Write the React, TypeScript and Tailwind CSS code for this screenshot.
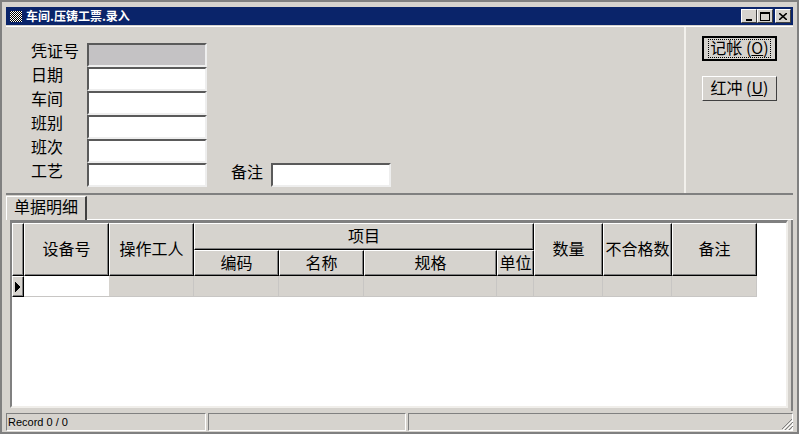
const font = "font-['Noto_Sans_CJK_SC','Liberation_Sans',sans-serif]";

const fields = ["日期", "车间", "班别", "班次"];

function Field({ label, disabled }: { label: string; disabled?: boolean }) {
  return (
    <div className="flex h-6 items-center">
      <span className="mb-[11px] w-[81px] pl-[25px] text-[16px] leading-none text-black">{label}</span>
      <Input className="w-[120px]" disabled={disabled} />
    </div>
  );
}

function Input({ className, disabled }: { className: string; disabled?: boolean }) {
  return (
    <div
      className={`h-[24px] border-2 border-t-[#5a5a5a] border-l-[#5a5a5a] border-r-[#eeeeee] border-b-[#eeeeee] ${
        disabled ? "bg-[#c4c2c4]" : "bg-white"
      } ${className}`}
    />
  );
}

function Head({ children, className = "" }: { children?: React.ReactNode; className?: string }) {
  return (
    <div
      className={`flex items-center justify-center overflow-hidden whitespace-nowrap border-t border-l border-t-white border-l-white border-r border-b border-r-black border-b-black bg-[#d6d3ce] pb-[3px] text-[16px] leading-none text-black shadow-[inset_-1px_-1px_0_#808080] ${className}`}
    >
      {children}
    </div>
  );
}

function WinButton({ children }: { children: React.ReactNode }) {
  return (
    <div className="flex h-[14px] w-4 items-center justify-center border border-t-white border-l-white border-r-[#404040] border-b-[#404040] bg-[#d6d3ce]">
      {children}
    </div>
  );
}

export default function App() {
  return (
    <div className={`flex h-[434px] w-[799px] flex-col overflow-hidden border-2 border-[#808080] bg-[#d6d3ce] ${font}`}>
      <div className="relative flex h-full flex-col border-[4px] border-b-[1px] border-[#d6d3ce]">
        {/* title bar */}
        <div className="mt-px flex h-[18px] shrink-0 items-center bg-[#0a246a] pl-[4px] pr-[2px]">
          <svg width="12" height="11" viewBox="0 0 12 11" shapeRendering="crispEdges">
            <rect width="12" height="11" fill="#fff" />
            {Array.from({ length: 132 }).map((_, i) =>
              (i % 12) + Math.floor(i / 12) & 1 ? null : (
                <rect key={i} x={i % 12} y={Math.floor(i / 12)} width="1" height="1" fill="#000" />
              ),
            )}
          </svg>
          <span className="ml-[4px] text-[12px] font-bold leading-none text-white">车间.压铸工票.录入</span>
          <div className="ml-auto flex">
            <WinButton>
              <span className="mt-[7px] h-[2px] w-[6px] bg-black" />
            </WinButton>
            <WinButton>
              <span className="h-[9px] w-[10px] border border-t-2 border-black" />
            </WinButton>
            <div className="ml-[2px]">
              <WinButton>
                <svg width="8" height="7" viewBox="0 0 8 7">
                  <path d="M0 0l8 7M8 0L0 7" stroke="#000" strokeWidth="1.6" />
                </svg>
              </WinButton>
            </div>
          </div>
        </div>

        {/* form */}
        <div className="mt-px flex h-[169px] shrink-0 border-t border-b-[2px] border-t-white border-b-[#808080]">
          <div className="flex-1 pt-[16px]">
            <Field label="凭证号" disabled />
            {fields.map((f) => (
              <Field key={f} label={f} />
            ))}
            <div className="flex h-6 items-center">
              <span className="mb-[11px] w-[81px] pl-[25px] text-[16px] leading-none text-black">工艺</span>
              <Input className="w-[120px]" />
              <span className="mb-[9px] ml-[24px] w-[40px] text-[16px] leading-none text-black">备注</span>
              <Input className="w-[120px]" />
            </div>
          </div>
          <div className="flex w-[109px] shrink-0 flex-col items-center border-l-2 border-l-[#f2f0ec] pt-[9px]">
            <div className="flex h-[25px] w-[75px] items-center justify-center border-2 border-black bg-[#d6d3ce]">
              <span className="border border-dotted border-black px-[1px] pb-[2px] text-[16px] leading-[15px] text-black whitespace-nowrap">
                记帐 (<span className="underline">O</span>)
              </span>
            </div>
            <div className="mt-[15px] flex h-[25px] w-[75px] items-center justify-center border border-t-white border-l-white border-r-[#404040] border-b-[#404040] bg-[#d6d3ce] pb-[3px] text-[16px] leading-none text-black whitespace-nowrap">
              红冲 (<span className="underline">U</span>)
            </div>
          </div>
        </div>

        {/* tab */}
        <div className="flex h-[25px] shrink-0 items-end">
          <div className="flex h-[24px] w-[81px] items-center justify-center border-t border-l border-r-2 border-t-white border-l-white border-r-[#404040] pb-[5px] text-[16px] leading-none text-black">
            单据明细
          </div>
          <div className="h-px flex-1 bg-white" />
        </div>

        {/* grid panel */}
        <div className="flex min-h-0 flex-1 flex-col border-r-[2px] border-r-[#808080] pb-[3px] pl-[4px] pr-[3px]">
          <div className="flex-1 border-t-[3px] border-l-[2px] border-b-2 border-r-2 border-t-[#808080] border-l-[#808080] border-r-[#f0eeea] border-b-[#f0eeea] bg-white">
            <div className="grid h-[53px] w-[745px] grid-cols-[12px_85px_85px_85px_85px_133px_37px_69px_69px_85px] grid-rows-[27px_26px]">
              <Head className="row-span-2" />
              <Head className="row-span-2">设备号</Head>
              <Head className="row-span-2">操作工人</Head>
              <Head className="col-span-4">项目</Head>
              <Head className="row-span-2">数量</Head>
              <Head className="row-span-2">不合格数</Head>
              <Head className="row-span-2">备注</Head>
              <Head>编码</Head>
              <Head>名称</Head>
              <Head>规格</Head>
              <Head>单位</Head>
            </div>
            <div className="flex h-[21px] w-[745px]">
              <div className="flex w-[12px] items-center justify-center border-t border-l border-t-white border-l-white border-r border-b border-r-black border-b-black bg-[#d6d3ce] shadow-[inset_-1px_-1px_0_#808080]">
                <svg width="6" height="10" viewBox="0 0 6 10" shapeRendering="crispEdges">
                  <path d="M0 0l6 5-6 5z" fill="#000" />
                </svg>
              </div>
              <div className="w-[85px] border-b border-b-[#c8c6c4] bg-white" />
              {[85, 85, 85, 133, 37, 69, 69, 85].map((w, i) => (
                <div
                  key={i}
                  className="border-r border-b border-r-[#c8c6c4] border-b-[#c8c6c4] bg-[#d6d3ce]"
                  style={{ width: w }}
                />
              ))}
            </div>
          </div>
        </div>

        {/* status bar */}
        <div className="flex h-[20px] shrink-0 gap-[2px] pt-[2px]">
          <div className="w-[200px] border border-t-[#808080] border-l-[#808080] border-r-white border-b-white pl-[1px] font-['Liberation_Sans',sans-serif] text-[11px] leading-[17px] text-black">
            Record 0 / 0
          </div>
          <div className="w-[198px] border border-t-[#808080] border-l-[#808080] border-r-white border-b-white" />
          <div className="flex-1 border border-t-[#808080] border-l-[#808080] border-r-white border-b-white" />
        </div>
        <svg className="absolute bottom-[1px] right-0" width="12" height="12" viewBox="0 0 12 12">
          <path d="M11 1L1 11M12 4L4 12M12 8L8 12" stroke="#808080" strokeWidth="1" />
          <path d="M12 2L2 12M12 6L6 12M12 10L10 12" stroke="#fff" strokeWidth="1" />
        </svg>
      </div>
    </div>
  );
}
